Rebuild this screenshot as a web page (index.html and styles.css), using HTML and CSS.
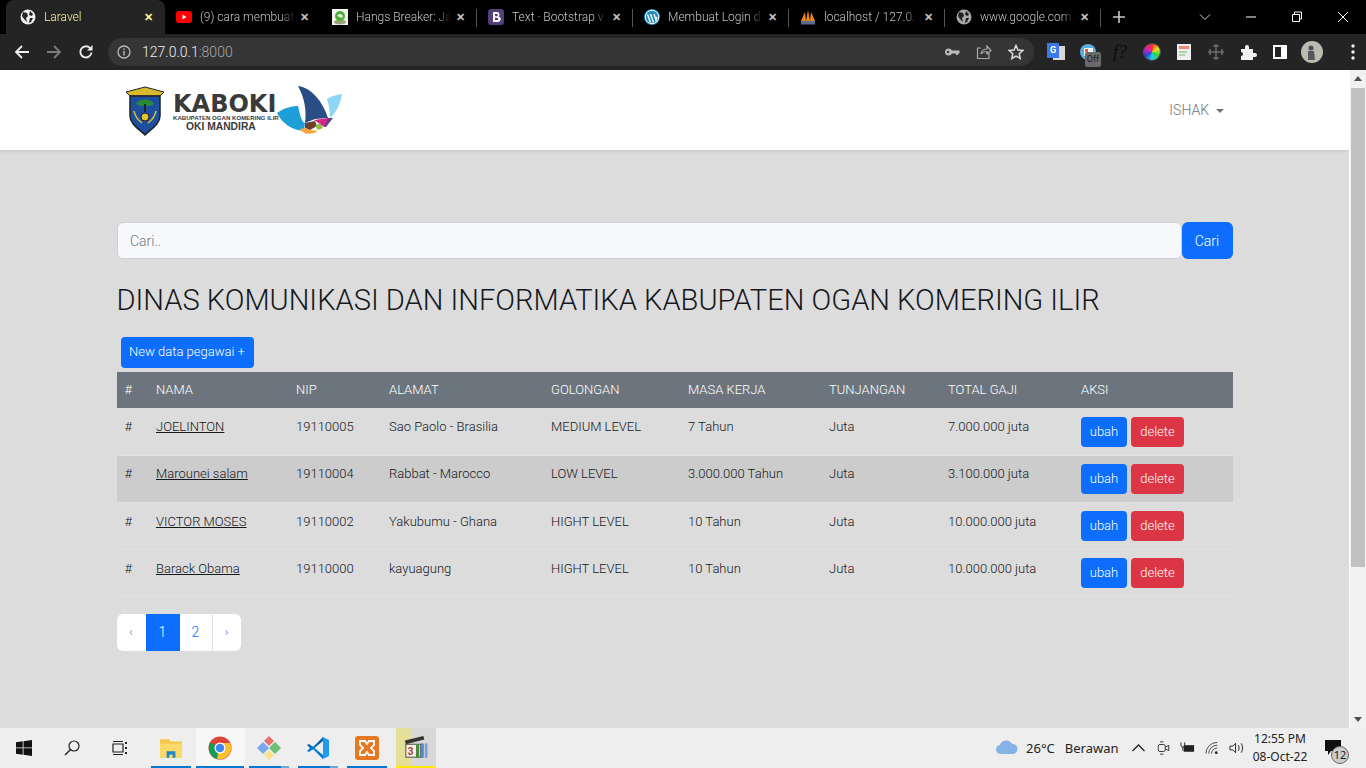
FILE: index.html
```html
<!DOCTYPE html>
<html lang="en">
<head>
    <meta charset="UTF-8">
    <title>Laravel</title>
    <link rel="stylesheet" href="styles.css">
</head>
<body>
    <!-- browser tabs -->
    <div class="tabstrip">
        <div class="tab tab-active">
            <svg class="fav" viewBox="0 0 16 16"><circle cx="8" cy="8" r="7.5" fill="#eee"/><path d="M3 3l4 1 1 3-2 2 1 4-3-3-2-3zM10 2l3 3-1 2-3-1zM10 9l3 0-2 4-2 1z" fill="#242424"/></svg>
            <span class="tab-title">Laravel</span>
            <span class="tab-x">✕</span>
        </div>
        <div class="tab">
            <svg class="fav" viewBox="0 0 16 16"><rect y="2" width="16" height="12" rx="3" fill="#f00"/><path d="M6.500 5.500l4 2.500-4 2.500z" fill="#fff"/></svg>
            <span class="tab-title">(9) cara membuat</span>
            <span class="tab-x">✕</span>
        </div>
        <div class="tab">
            <svg class="fav" viewBox="0 0 16 16"><rect width="16" height="16" fill="#f4f4f0"/><ellipse cx="8" cy="13" rx="6" ry="2.500" fill="#98a878"/><circle cx="8" cy="7" r="5" fill="#4caf3a"/><path d="M5 6l2 2 3 1 1-2-2-2z" fill="#e8f5e0"/></svg>
            <span class="tab-title">Hangs Breaker: Ja</span>
            <span class="tab-x">✕</span>
        </div>
        <div class="tab">
            <svg class="fav" viewBox="0 0 16 16"><rect width="16" height="16" rx="3" fill="#563d7c"/><path d="M5 3h4a2.500 2.500 0 0 1 1.500 4.500A2.700 2.700 0 0 1 9.300 13H5zM7 5v2.200h1.800a1.100 1.100 0 0 0 0-2.200zM7 8.800V11h2.200a1.100 1.100 0 0 0 0-2.200z" fill="#fff" fill-rule="evenodd"/></svg>
            <span class="tab-title">Text · Bootstrap v</span>
            <span class="tab-x">✕</span>
        </div>
        <div class="tab">
            <svg class="fav" viewBox="0 0 16 16"><circle cx="8" cy="8" r="8" fill="#1e8cbe"/><circle cx="8" cy="8" r="6.700" fill="none" stroke="#fff" stroke-width="1"/><path d="M3.500 5.500l3 8M6.500 5l3 8.500M10 5l2 6 1-3" fill="none" stroke="#fff" stroke-width="1.400"/></svg>
            <span class="tab-title">Membuat Login d</span>
            <span class="tab-x">✕</span>
        </div>
        <div class="tab">
            <svg class="fav" viewBox="0 0 16 16"><path d="M1 12L5 3l1 9zM6 12l2-11 2 11zM10 12l1-9 4 9z" fill="#e8891c"/><rect x="1" y="12" width="14" height="3.500" fill="#5d6a8f"/></svg>
            <span class="tab-title">localhost / 127.0.</span>
            <span class="tab-x">✕</span>
        </div>
        <div class="tab tab-last">
            <svg class="fav" viewBox="0 0 16 16"><circle cx="8" cy="8" r="7.500" fill="#a8a8a8"/><path d="M3 3l4 1 1 3-2 2 1 4-3-3-2-3zM10 2l3 3-1 2-3-1zM10 9l3 0-2 4-2 1z" fill="#222"/></svg>
            <span class="tab-title">www.google.com</span>
            <span class="tab-x">✕</span>
        </div>
        <svg class="newtab" viewBox="0 0 14 14"><path d="M7 1v12M1 7h12" stroke="#c8c8c8" stroke-width="1.600"/></svg>
        <div class="winctl">
            <svg viewBox="0 0 12 12"><path d="M1 3.500l5 5 5-5" fill="none" stroke="#ccc"/></svg>
            <svg viewBox="0 0 12 12"><path d="M1 6h10" stroke="#fff"/></svg>
            <svg viewBox="0 0 12 12"><path d="M3.500 3V1h7v7h-2M1.500 3.500h7v7h-7z" fill="none" stroke="#fff"/></svg>
            <svg viewBox="0 0 12 12"><path d="M1 1l10 10M11 1L1 11" stroke="#fff"/></svg>
        </div>
    </div>

    <!-- address bar -->
    <div class="toolbar">
        <svg class="tool" viewBox="0 0 16 16"><path d="M15 8H2M8 2L2 8l6 6" fill="none" stroke="#eee" stroke-width="1.800"/></svg>
        <svg class="tool" viewBox="0 0 16 16"><path d="M1 8h13M8 2l6 6-6 6" fill="none" stroke="#7c7c7c" stroke-width="1.800"/></svg>
        <svg class="tool" viewBox="0 0 16 16"><path d="M13.500 8.500A5.600 5.600 0 1 1 12 4" fill="none" stroke="#eee" stroke-width="1.800"/><path d="M14.500 1v5.500H9z" fill="#eee"/></svg>
        <div class="omnibox">
            <svg class="info" viewBox="0 0 14 14"><circle cx="7" cy="7" r="6" fill="none" stroke="#bbb" stroke-width="1.300"/><path d="M7 6v4.500M7 3.500v1.400" stroke="#bbb" stroke-width="1.400"/></svg>
            <span class="url">127.0.0.1<span class="url-port">:8000</span></span>
            <div class="omni-icons">
                <svg viewBox="0 0 16 16"><circle cx="4.500" cy="8" r="3.500" fill="#bbb"/><path d="M7 6.500h8.500v3H14v1.500h-2V9.500H7z" fill="#bbb"/><circle cx="4" cy="8" r="1.200" fill="#353535"/></svg>
                <svg viewBox="0 0 16 16"><path d="M13 9v5.500H1.500V4H5M5 10c.5-3.500 3-5 6-5V2l4 4.500L11 10V7.500C8.500 7.500 6.500 8 5 10z" fill="none" stroke="#aaa" stroke-width="1.200"/></svg>
                <svg viewBox="0 0 16 16"><path d="M8 1.500l2 4.500 4.800.5-3.600 3.200 1 4.800L8 12l-4.200 2.500 1-4.800L1.200 6.500 6 6z" fill="none" stroke="#ddd" stroke-width="1.500"/></svg>
            </div>
        </div>
        <div class="exts">
            <div class="ext-tr"><span class="tr-back"></span><span class="tr-front">G</span></div>
            <div class="ext-off">
                <svg viewBox="0 0 18 18"><circle cx="9" cy="9" r="8" fill="#5aaee0"/><rect x="5" y="5" width="9" height="8" fill="#f4f4f4"/><rect x="6" y="6" width="3" height="3" fill="#e05a3a"/></svg>
                <span class="off-badge">Off</span>
            </div>
            <span class="ext-f">f?</span>
            <span class="ext-wheel"></span>
            <svg viewBox="0 0 18 18"><rect x="2" y="1" width="14" height="16" fill="#eee"/><rect x="4" y="3" width="10" height="3" fill="#e8897a"/><path d="M4 9h8M4 12h6" stroke="#9bc99b" stroke-width="1.500"/></svg>
            <svg viewBox="0 0 18 18"><path d="M9 1v16M1 9h16M6 3h6M6 15h6M3 6v6M15 6v6" stroke="#6c6c6c" stroke-width="1.500"/></svg>
            <svg viewBox="0 0 18 18"><path d="M2 6h4V4a2 2 0 0 1 4 0v2h4v4h2a2 2 0 0 1 0 4h-2v3H2v-4a2 2 0 0 0 0-4z" fill="#f2f2f2"/></svg>
            <svg viewBox="0 0 18 18"><rect x="2" y="2" width="14" height="14" fill="#fff"/><rect x="4" y="4" width="6" height="10" fill="#242424"/></svg>
            <svg viewBox="0 0 22 22"><circle cx="11" cy="11" r="11" fill="#b8bdaf"/><circle cx="10" cy="7" r="2.500" fill="#4c4c4c"/><path d="M7 10h6l1 9H7z" fill="#55595c"/></svg>
            <svg class="ext-menu" viewBox="0 0 6 18"><circle cx="3" cy="3" r="1.700" fill="#eee"/><circle cx="3" cy="9" r="1.700" fill="#eee"/><circle cx="3" cy="15" r="1.700" fill="#eee"/></svg>
        </div>
    </div>

    <!-- page viewport -->
    <div class="viewport">
        <div class="page">
            <nav class="navbar">
                <a class="brand" href="#">
                    <svg class="shield" viewBox="0 0 40 50">
                        <path d="M1 6L20 1l19 5-4 4H5z" fill="#d8b92e" stroke="#222" stroke-width="1"/>
                        <path d="M5 10h30v20c0 8-9 13-15 19C14 43 5 38 5 30z" fill="#1c4fa0" stroke="#222" stroke-width="1.500"/>
                        <path d="M11 18c3-6 15-6 18 0-4 3-14 3-18 0z" fill="#2a8a3c"/>
                        <path d="M20 18v8" stroke="#222" stroke-width="2"/>
                        <circle cx="20" cy="31" r="4" fill="#e2c42e" stroke="#222"/>
                        <path d="M9 25c1 6 4 9 8 12M31 25c-1 6-4 9-8 12" fill="none" stroke="#e2c42e" stroke-width="1.500"/>
                    </svg>
                    <span class="brand-text">
                        <span class="brand-name">KABOKI</span>
                        <span class="brand-sub">KABUPATEN OGAN KOMERING ILIR</span>
                        <span class="brand-motto">OKI MANDIRA</span>
                    </span>
                    <svg class="leaf" viewBox="0 0 66 50">
                        <path d="M1 28C8 23 15 21 22 21C24 30 26 38 29 38L28 46C15 45 6 38 1 28z" fill="#1f9ed8"/>
                        <path d="M51 14C56 11 60 10 66 9C64 20 60 28 54 33C54 26 53 20 51 14z" fill="#8ed6f5"/>
                        <path d="M22 1C36 3 47 17 52 33L39 34L29 38C31 25 28 12 22 1z" fill="#2a4d86"/>
                        <path d="M38 35L52 33L54 33L48 42z" fill="#d8278c"/>
                        <path d="M52 33L57 33L50 42L48 42z" fill="#6d3a8a"/>
                        <path d="M29 38L39 36L41 41L34 45L29 43z" fill="#6b3f2a"/>
                        <path d="M39 41L44 38L47 43L42 45z" fill="#8fbf3c"/>
                        <path d="M24 44L29 43L34 45L42 46C38 49 28 51 24 44z" fill="#f4a93a"/>
                    </svg>
                </a>
                <a class="user" href="#">ISHAK<span class="caret"></span></a>
            </nav>

            <main class="content">
                <form class="search">
                    <input class="search-input" type="text" placeholder="Cari..">
                    <button class="search-btn" type="button">Cari</button>
                </form>

                <h1 class="title">DINAS KOMUNIKASI DAN INFORMATIKA KABUPATEN OGAN KOMERING ILIR</h1>

                <a class="btn btn-new" href="#">New data pegawai +</a>

                <table class="data">
                    <colgroup>
                        <col class="c-no"><col class="c-nama"><col class="c-nip"><col class="c-alamat"><col class="c-gol"><col class="c-masa"><col class="c-tunj"><col class="c-total"><col class="c-aksi">
                    </colgroup>
                    <thead>
                        <tr><th>#</th><th>NAMA</th><th>NIP</th><th>ALAMAT</th><th>GOLONGAN</th><th>MASA KERJA</th><th>TUNJANGAN</th><th>TOTAL GAJI</th><th>AKSI</th></tr>
                    </thead>
                    <tbody>
                        <tr>
                            <td>#</td><td><a href="#">JOELINTON</a></td><td>19110005</td><td>Sao Paolo - Brasilia</td><td>MEDIUM LEVEL</td><td>7 Tahun</td><td>Juta</td><td>7.000.000 juta</td>
                            <td class="aksi"><a class="btn btn-blue" href="#">ubah</a><a class="btn btn-red" href="#">delete</a></td>
                        </tr>
                        <tr>
                            <td>#</td><td><a href="#">Marounei salam</a></td><td>19110004</td><td>Rabbat - Marocco</td><td>LOW LEVEL</td><td>3.000.000 Tahun</td><td>Juta</td><td>3.100.000 juta</td>
                            <td class="aksi"><a class="btn btn-blue" href="#">ubah</a><a class="btn btn-red" href="#">delete</a></td>
                        </tr>
                        <tr>
                            <td>#</td><td><a href="#">VICTOR MOSES</a></td><td>19110002</td><td>Yakubumu - Ghana</td><td>HIGHT LEVEL</td><td>10 Tahun</td><td>Juta</td><td>10.000.000 juta</td>
                            <td class="aksi"><a class="btn btn-blue" href="#">ubah</a><a class="btn btn-red" href="#">delete</a></td>
                        </tr>
                        <tr>
                            <td>#</td><td><a href="#">Barack Obama</a></td><td>19110000</td><td>kayuagung</td><td>HIGHT LEVEL</td><td>10 Tahun</td><td>Juta</td><td>10.000.000 juta</td>
                            <td class="aksi"><a class="btn btn-blue" href="#">ubah</a><a class="btn btn-red" href="#">delete</a></td>
                        </tr>
                    </tbody>
                </table>

                <div class="pager">
                    <a class="pg pg-prev" href="#">‹</a>
                    <a class="pg pg-one" href="#">1</a>
                    <a class="pg pg-two" href="#">2</a>
                    <a class="pg pg-next" href="#">›</a>
                </div>
            </main>
        </div>
        <div class="scrollbar">
            <span class="sb-arrow"></span>
            <span class="sb-thumb"></span>
            <span class="sb-spacer"></span>
            <span class="sb-arrow sb-arrow-down"></span>
        </div>
    </div>

    <!-- windows taskbar -->
    <div class="taskbar">
        <div class="task-sys">
            <svg viewBox="0 0 16 16"><path d="M0 2.300l6.700-1v6.200H0zM7.500 1.200L16 0v7.500H7.500zM0 8.300h6.700v6.400l-6.700-1zM7.500 8.300H16V16l-8.500-1.200z" fill="#111"/></svg>
            <svg viewBox="0 0 16 16"><circle cx="10" cy="6" r="5" fill="none" stroke="#222" stroke-width="1.200"/><path d="M6.500 9.500L1 15" stroke="#222" stroke-width="1.400"/></svg>
            <svg viewBox="0 0 16 16"><path d="M1 4h10v8H1zM1 1.500h10M1 14.500h10" fill="none" stroke="#222" stroke-width="1.200"/><path d="M14 2v2M14 7v2M14 12v2" stroke="#222" stroke-width="2"/></svg>
        </div>
        <div class="task-apps">
            <div class="app app-on">
                <svg viewBox="0 0 22 20"><path d="M1 2h8l2 2h10v15H1z" fill="#f6c644"/><rect x="1" y="6" width="20" height="13" fill="#fbd96b"/><path d="M7 19v-6h8v6h-2.500v-3h-3v3z" fill="#1c86c9"/></svg>
            </div>
            <div class="app app-on app-active">
                <svg viewBox="0 0 24 24"><circle cx="12" cy="12" r="11.500" fill="#db4437"/><path d="M12 12L2.200 6.500A11.500 11.500 0 0 0 9 23z" fill="#0f9d58"/><path d="M12 7h10a11.500 11.500 0 0 1-13 16z" fill="#fbc02d"/><circle cx="12" cy="12" r="5.500" fill="#fff"/><circle cx="12" cy="12" r="4.300" fill="#4285f4"/></svg>
            </div>
            <div class="app app-on app-split">
                <svg viewBox="0 0 24 24"><path d="M6 6l6 6-6 6-6-6z" fill="#7aa6ec"/><path d="M12 0l5 5-5 5-5-5z" fill="#e5736b"/><path d="M18 6l6 6-6 6-6-6z" fill="#6cbf73"/><path d="M12 14l5 5-5 5-5-5z" fill="#fbe08a"/></svg>
            </div>
            <div class="app app-on app-split">
                <svg viewBox="0 0 24 24"><path d="M17 1l6 3v16l-6 3z" fill="#1f9cf0"/><path d="M17 1L7 11l-4-3-2 1 5 5 11-9z" fill="#0065a9"/><path d="M17 23L7 13l-4 3-2-1 5-5 11 9z" fill="#007acc"/></svg>
            </div>
            <div class="app app-on">
                <svg viewBox="0 0 24 24"><rect width="24" height="24" rx="3" fill="#e87722"/><path d="M5 5h5l2 3 2-3h5v4l-3 3 3 3v4h-5l-2-3-2 3H5v-4l3-3-3-3z" fill="none" stroke="#fff" stroke-width="1.800"/></svg>
            </div>
            <div class="app app-media">
                <span class="media-flash"></span>
                <svg viewBox="0 0 26 26"><path d="M1 6l20-5 1 4-20 5z" fill="#333"/><rect x="2" y="10" width="16" height="14" fill="#f6f0ea" stroke="#444"/><text x="4" y="22" class="media-num">3</text><rect x="13" y="10" width="3.500" height="15" rx="1.500" fill="#4a8a3c"/><rect x="18" y="9" width="3.500" height="16" rx="1.500" fill="#5a88c8"/><rect x="22.500" y="9" width="3" height="16" rx="1.500" fill="#7aa2d8"/></svg>
            </div>
        </div>
        <div class="tray">
            <svg class="cloud" viewBox="0 0 24 15"><path d="M6 14a4.500 4.500 0 0 1-1-9 6.500 6.500 0 0 1 12-1 5 5 0 0 1 1 10z" fill="#86b3e6"/></svg>
            <span class="temp">26°C</span>
            <span class="weather">Berawan</span>
            <svg class="tray-ico tray-chev" viewBox="0 0 14 14"><path d="M1 10l6-6 6 6" fill="none" stroke="#222" stroke-width="1.300"/></svg>
            <svg class="tray-ico" viewBox="0 0 14 16"><rect x="1" y="4" width="8" height="8" rx="2" fill="none" stroke="#222"/><path d="M9 7l4-2v6l-4-2M3 1h4M3 15h4" fill="none" stroke="#222"/></svg>
            <svg class="tray-ico" viewBox="0 0 16 14"><rect x="4" y="4" width="11" height="7" fill="#222"/><path d="M1 1v3a2 2 0 0 0 4 0V1M3 6v4" fill="none" stroke="#222"/></svg>
            <svg class="tray-ico" viewBox="0 0 16 14"><path d="M1 13A12 12 0 0 1 13 1M4 13a9 9 0 0 1 9-9M7 13a6 6 0 0 1 6-6" fill="none" stroke="#444"/><circle cx="12" cy="12" r="1.500" fill="#222"/></svg>
            <svg class="tray-ico" viewBox="0 0 16 14"><path d="M1 5h3l3-3v10L4 9H1z" fill="none" stroke="#222"/><path d="M10 4c1 2 1 4 0 6M13 2c2 3 2 7 0 10" fill="none" stroke="#222"/></svg>
            <div class="clock"><span>12:55 PM</span><span>08-Oct-22</span></div>
            <div class="notif">
                <svg viewBox="0 0 16 15"><path d="M0 0h16v11H6l-3 4v-4H0z" fill="#111"/></svg>
                <span class="notif-n">12</span>
            </div>
        </div>
    </div>
</body>
</html>
```

FILE: styles.css
```css
* {
    margin: 0;
    padding: 0;
    box-sizing: border-box;
}

html, body {
    height: 768px;
    overflow: hidden;
}

body {
    display: flex;
    flex-direction: column;
    font-family: Roboto, "Liberation Sans", sans-serif;
    background: #dcdcdc;
    color: #212529;
}

a {
    text-decoration: none;
}

/* browser tabs */
.tabstrip {
    height: 34px;
    background: #000;
    display: flex;
    align-items: stretch;
    padding-left: 6px;
    flex-shrink: 0;
}

.tab {
    width: 156px;
    display: flex;
    align-items: center;
    padding: 0 10px 0 11px;
    font-size: 12px;
    font-weight: 300;
    color: #c6c6c6;
    position: relative;
}

.tab::after {
    content: "";
    position: absolute;
    right: 0;
    top: 9px;
    height: 18px;
    width: 1px;
    background: #555;
}

.tab-active {
    background: #242424;
    border-radius: 8px 8px 0 0;
    color: #fff59d;
    width: 159px;
    padding-left: 14px;
}

.tab-active::after,
.tab:nth-child(2)::after {
    display: none;
}

.fav {
    width: 16px;
    height: 16px;
    flex-shrink: 0;
}

.tab-title {
    flex: 1;
    margin-left: 8px;
    white-space: nowrap;
    overflow: hidden;
    -webkit-mask-image: linear-gradient(to right, #000 85%, transparent);
    mask-image: linear-gradient(to right, #000 85%, transparent);
}

.tab-x {
    font-size: 11px;
    font-weight: 700;
    width: 14px;
    text-align: center;
    margin-left: 2px;
}

.newtab {
    width: 14px;
    height: 14px;
    margin: 10px 0 0 11px;
}

.winctl {
    margin-left: auto;
    display: flex;
    align-items: center;
}

.winctl svg {
    width: 12px;
    height: 12px;
    margin: 0 17px;
}

/* address bar */
.toolbar {
    height: 36px;
    background: #242424;
    display: flex;
    align-items: center;
    padding-left: 14px;
    flex-shrink: 0;
}

.tool {
    width: 16px;
    height: 16px;
    margin-right: 16px;
}

.omnibox {
    width: 926px;
    height: 28px;
    margin-left: -2px;
    background: #353535;
    border-radius: 14px;
    display: flex;
    align-items: center;
    padding: 0 10px 0 9px;
}

.info {
    width: 14px;
    height: 14px;
}

.url {
    margin-left: 11px;
    font-size: 14px;
    font-weight: 300;
    color: #f0f0f0;
}

.url-port {
    color: #a8a8a8;
}

.omni-icons {
    margin-left: auto;
    display: flex;
    gap: 16px;
}

.omni-icons svg {
    width: 16px;
    height: 16px;
}

.exts {
    display: flex;
    align-items: center;
    margin-left: 13px;
    gap: 14px;
}

.exts > svg {
    width: 18px;
    height: 18px;
}

.exts > svg:nth-last-child(2) {
    width: 22px;
    height: 22px;
    margin: 0 -2px;
}

.exts > .ext-menu {
    width: 6px;
    height: 18px;
    margin-left: 15px;
}

.ext-tr {
    width: 18px;
    height: 18px;
    position: relative;
}

.tr-back {
    position: absolute;
    left: 6px;
    top: 3px;
    width: 12px;
    height: 14px;
    background: #d8d8d8;
}

.tr-front {
    position: absolute;
    left: 0;
    top: 0;
    width: 12px;
    height: 15px;
    background: #3b78e7;
    color: #fff;
    font-size: 9px;
    font-weight: 700;
    line-height: 15px;
    text-align: center;
}

.ext-off {
    width: 18px;
    height: 18px;
    position: relative;
}

.ext-off svg {
    width: 18px;
    height: 18px;
}

.off-badge {
    position: absolute;
    left: 6px;
    top: 9px;
    width: 16px;
    height: 15px;
    border-radius: 2px;
    background: #6a6a6a;
    color: #222;
    font-size: 9px;
    line-height: 15px;
    text-align: center;
}

.ext-f {
    width: 18px;
    text-align: center;
    font-family: "Liberation Serif", serif;
    font-style: italic;
    font-size: 18px;
    color: #0c0c0c;
}

.ext-wheel {
    width: 16px;
    height: 16px;
    margin: 0 1px;
    border-radius: 50%;
    background: conic-gradient(#f03030, #f0e020, #30d040, #20d0e0, #3040e0, #e020c0, #f03030);
    box-shadow: 0 0 0 1px #555;
}

/* page area */
.viewport {
    flex: 1;
    display: flex;
    min-height: 0;
}

.page {
    flex: 1;
    min-width: 0;
    background: #dcdcdc;
}

.navbar {
    height: 80px;
    background: #fff;
    box-shadow: 0 1px 3px rgba(0, 0, 0, 0.12);
    display: flex;
    align-items: center;
    justify-content: space-between;
    padding: 0 125px;
}

.brand {
    display: flex;
    align-items: center;
    color: #333;
}

.shield {
    width: 40px;
    height: 50px;
    margin-top: 1px;
}

.brand-text {
    display: flex;
    flex-direction: column;
    margin: 7px 0 0 8px;
    width: 102px;
    font-family: "Liberation Sans", sans-serif;
    font-weight: 700;
    color: #3a3a3a;
}

.brand-name {
    font-family: "DejaVu Sans", sans-serif;
    font-size: 24px;
    line-height: 19px;
}

.brand-sub {
    font-size: 6.100px;
    line-height: 8px;
    white-space: nowrap;
}

.brand-motto {
    font-size: 10.300px;
    line-height: 10px;
    margin-left: 13px;
    white-space: nowrap;
}

.leaf {
    width: 66px;
    height: 50px;
    margin-left: 1px;
}

.user {
    font-size: 14px;
    font-weight: 300;
    color: #737373;
    margin-top: -1px;
}

.caret {
    display: inline-block;
    margin-left: 7px;
    vertical-align: 2px;
    border-top: 4px solid #737373;
    border-left: 4px solid transparent;
    border-right: 4px solid transparent;
}

.content {
    width: 1116px;
    margin: 0 auto;
    padding-top: 72px;
}

.search {
    display: flex;
    height: 37px;
}

.search-input {
    flex: 1;
    border: 1px solid #ccd0d8;
    border-radius: 6px;
    background: #f8f9fc;
    padding: 0 12.500px;
    font: 300 14px Roboto, sans-serif;
    outline: none;
}

.search-input::placeholder {
    color: #6c757d;
}

.search-btn {
    width: 51px;
    border: none;
    border-radius: 6px;
    background: #0d6efd;
    color: #fff;
    font: 300 14px Roboto, sans-serif;
}

.title {
    font-size: 29.100px;
    font-weight: 300;
    line-height: 36px;
    margin-top: 23px;
    color: #15181c;
    white-space: nowrap;
}

.btn {
    display: inline-block;
    border-radius: 4px;
    color: #fff;
    font-size: 13px;
    font-weight: 300;
    text-align: center;
}

.btn-new {
    width: 133px;
    height: 31px;
    line-height: 30px;
    background: #0d6efd;
    margin: 19px 0 4px 4px;
    display: block;
}

/* table */
.data {
    width: 100%;
    border-collapse: collapse;
    table-layout: fixed;
    font-size: 13px;
    font-weight: 300;
    color: #15181c;
}

.c-no { width: 31.500px; }
.c-nama { width: 140px; }
.c-nip { width: 93px; }
.c-alamat { width: 162px; }
.c-gol { width: 137px; }
.c-masa { width: 141px; }
.c-tunj { width: 119px; }
.c-total { width: 133px; }
.c-aksi { width: 159.500px; }

.data th {
    height: 36px;
    background: #6c757d;
    color: #fff;
    font-weight: 300;
    font-size: 13px;
    text-align: left;
    padding: 0 8px 1px;
}

.data td {
    height: 47px;
    padding: 9px 8px 0;
    vertical-align: top;
    border-bottom: 1px solid #e2e2e6;
    line-height: 19px;
}

.data td.aksi {
    padding-top: 8.500px;
}

.data tbody tr:nth-child(2) td {
    background: #ccc;
}

.data tbody tr:nth-child(2) td:not(.aksi) {
    padding-top: 8px;
}

.data td a:not(.btn) {
    color: #15181c;
    text-decoration: underline;
}

.data td .btn {
    width: 46px;
    height: 30px;
    line-height: 29px;
    font-size: 13px;
    color: #fff;
}

.data td .btn-red {
    width: 53px;
    margin-left: 4px;
}

.btn-blue {
    background: #0d6efd;
}

.btn-red {
    background: #dc3545;
}

/* pagination */
.pager {
    display: flex;
    margin-top: 17px;
    height: 37px;
    width: 124px;
    border-radius: 6px;
    overflow: hidden;
    background: #fff;
    font-size: 14px;
    font-weight: 300;
}

.pg {
    display: flex;
    align-items: center;
    justify-content: center;
    color: #0d6efd;
}

.pg-prev { width: 29px; color: #6c757d; font-size: 12px; }
.pg-one { width: 34px; background: #0d6efd; color: #fff; }
.pg-two { width: 33px; border-right: 1px solid #dee2e6; }
.pg-next { width: 28px; font-size: 12px; }

/* scrollbar */
.scrollbar {
    width: 17px;
    background: #f1f1f1;
    border-left: 1px solid #fff;
    display: flex;
    flex-direction: column;
    align-items: center;
    padding: 0 1px;
}

.sb-arrow {
    width: 0;
    height: 0;
    margin: 6px 0;
    border-left: 4px solid transparent;
    border-right: 4px solid transparent;
    border-bottom: 5px solid #505050;
}

.sb-arrow-down {
    border-bottom: none;
    border-top: 5px solid #505050;
}

.sb-thumb {
    width: 100%;
    height: 479px;
    background: #c1c1c1;
    margin-top: 1px;
}

.sb-spacer {
    flex: 1;
}

/* taskbar */
.taskbar {
    height: 40px;
    background: #eee;
    display: flex;
    align-items: stretch;
    flex-shrink: 0;
    color: #222;
}

.task-sys {
    width: 147px;
    display: flex;
}

.task-sys svg {
    width: 48px;
    height: 16px;
    margin-top: 12px;
}

.task-apps {
    display: flex;
}

.app {
    width: 49px;
    display: flex;
    align-items: center;
    justify-content: center;
    position: relative;
}

.app svg {
    width: 24px;
    height: 24px;
    margin-right: 1px;
    position: relative;
}

.app-on::after {
    content: "";
    position: absolute;
    left: 4px;
    right: 5px;
    bottom: 0;
    height: 2px;
    background: #0078d4;
}

.app-active {
    background: #f7f7f7;
}

.app-active::after {
    left: 0;
    right: 1px;
}

.app-split::after {
    background: linear-gradient(to right, #0078d4 80%, #6fa9dc 80%);
}

.app-media {
    margin-left: 4px;
    width: 40px;
    background: #d8d8d8;
    border-bottom: 2px solid #ffea00;
}

.media-flash {
    position: absolute;
    left: 0;
    top: 0;
    bottom: 0;
    width: 15px;
    background: #e4e09a;
}

.media-num {
    font: 700 11px "Liberation Sans", sans-serif;
    fill: #b3361f;
}

.tray {
    margin-left: auto;
    display: flex;
    align-items: center;
    padding-right: 10px;
    font-size: 13px;
}

.cloud {
    width: 24px;
    height: 15px;
    margin-top: -2px;
}

.temp {
    margin-left: 7px;
    font-family: "Noto Sans", sans-serif;
    font-size: 13px;
}

.weather {
    margin-left: 10px;
    font-family: "Noto Sans", sans-serif;
    font-size: 13px;
}

.tray-ico {
    width: 15px;
    height: 14px;
    margin-left: 9.500px;
}

.tray-chev {
    margin-left: 12.500px;
}

.clock {
    width: 72px;
    display: flex;
    flex-direction: column;
    align-items: center;
    font-family: "Noto Sans", sans-serif;
    font-size: 12px;
    line-height: 18px;
}

.notif {
    width: 32px;
    height: 30px;
    margin-left: 8px;
    position: relative;
}

.notif svg {
    width: 16px;
    height: 15px;
    position: absolute;
    left: 1px;
    top: 7px;
}

.notif-n {
    position: absolute;
    left: 7px;
    top: 13px;
    width: 18px;
    height: 18px;
    border-radius: 50%;
    border: 1px solid #666;
    background: #ccc;
    font-family: "Noto Sans", sans-serif;
    font-size: 11px;
    line-height: 16px;
    text-align: center;
}
```
